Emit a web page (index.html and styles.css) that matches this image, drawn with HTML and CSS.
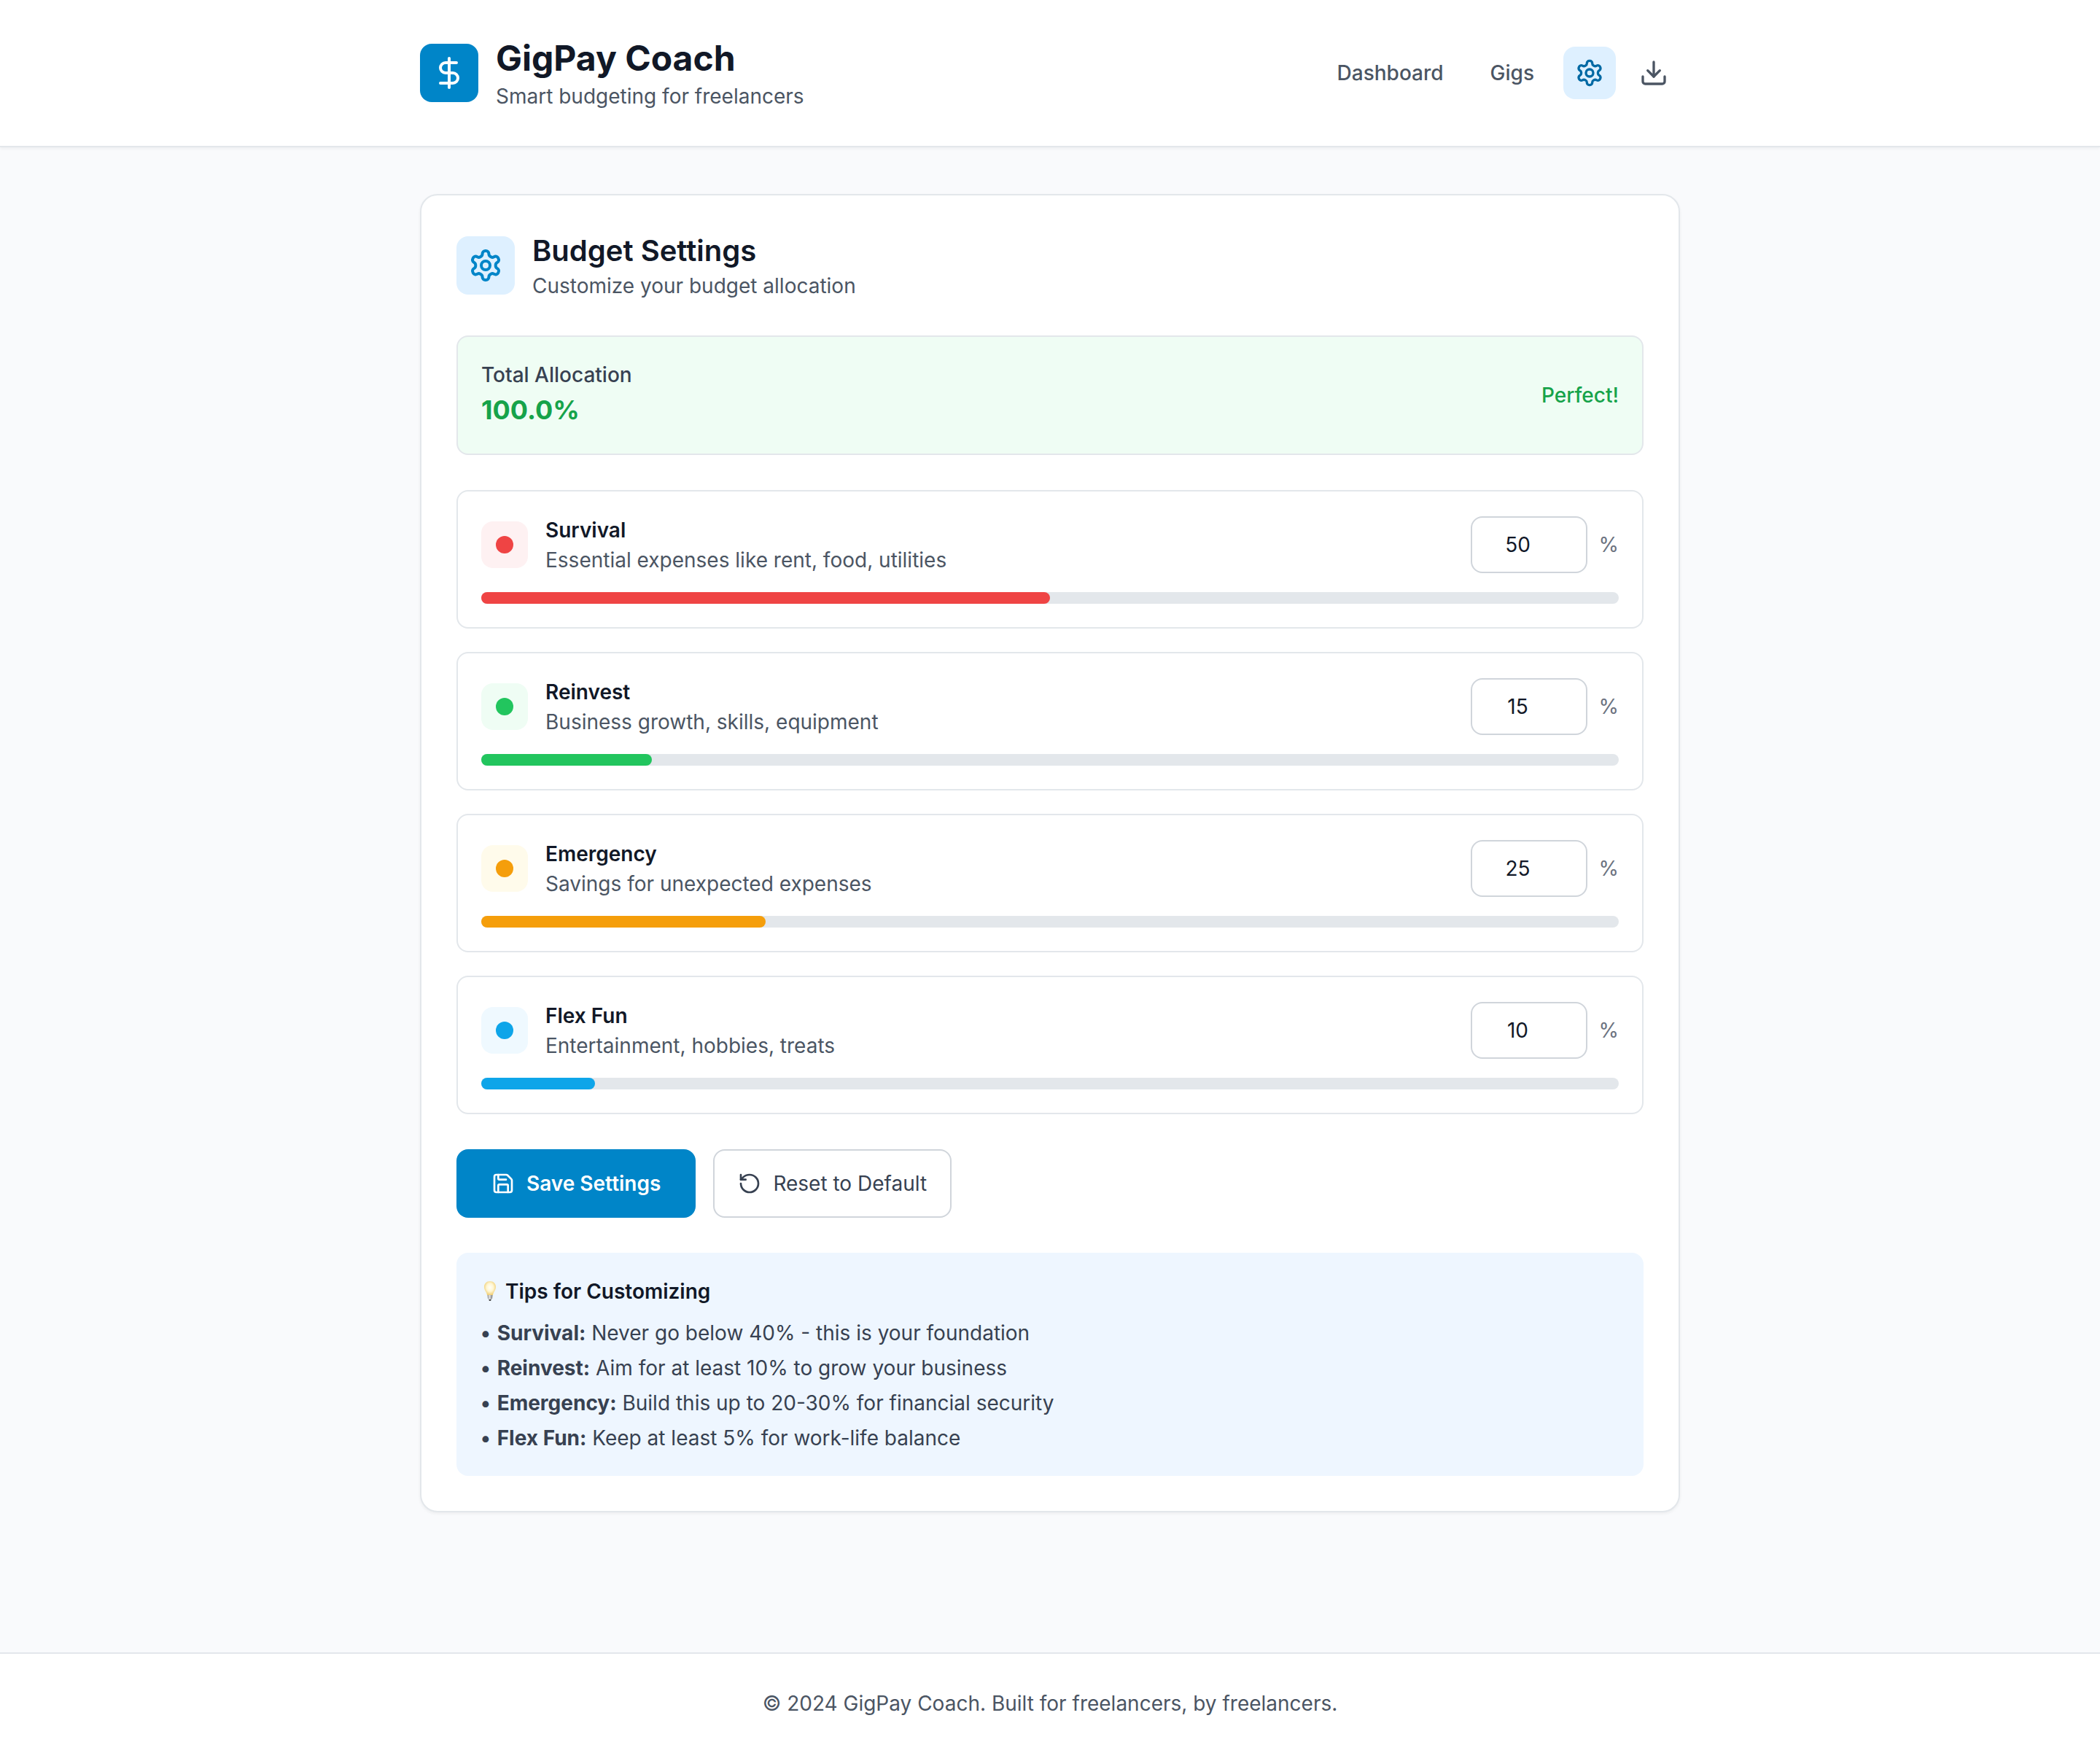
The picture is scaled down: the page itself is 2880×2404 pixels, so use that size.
FILE: index.html
```html
<!DOCTYPE html>
<html lang="en">
<head>
  <meta charset="utf-8">
  <meta name="viewport" content="width=device-width, initial-scale=1">
  <title>GigPay Coach</title>
  <link rel="stylesheet" href="styles.css">
</head>
<body>
  <svg class="sprite" aria-hidden="true">
    <symbol id="icon-settings" viewBox="0 0 24 24">
      <path d="M12.22 2h-.44a2 2 0 0 0-2 2v.18a2 2 0 0 1-1 1.73l-.43.25a2 2 0 0 1-2 0l-.15-.08a2 2 0 0 0-2.73.73l-.22.38a2 2 0 0 0 .73 2.73l.15.1a2 2 0 0 1 1 1.72v.51a2 2 0 0 1-1 1.74l-.15.09a2 2 0 0 0-.73 2.73l.22.38a2 2 0 0 0 2.73.73l.15-.08a2 2 0 0 1 2 0l.43.25a2 2 0 0 1 1 1.73V20a2 2 0 0 0 2 2h.44a2 2 0 0 0 2-2v-.18a2 2 0 0 1 1-1.73l.43-.25a2 2 0 0 1 2 0l.15.08a2 2 0 0 0 2.73-.73l.22-.39a2 2 0 0 0-.73-2.73l-.15-.08a2 2 0 0 1-1-1.74v-.5a2 2 0 0 1 1-1.74l.15-.09a2 2 0 0 0 .73-2.73l-.22-.38a2 2 0 0 0-2.73-.73l-.15.08a2 2 0 0 1-2 0l-.43-.25a2 2 0 0 1-1-1.73V4a2 2 0 0 0-2-2z"/>
      <circle cx="12" cy="12" r="3"/>
    </symbol>
  </svg>

  <header class="site-header">
    <div class="container header-row">
      <div class="brand">
        <div class="tile tile-brand">
          <svg class="icon icon-lg" viewBox="0 0 24 24" aria-hidden="true"><path d="M12 2v20"/><path d="M17 5H9.5a3.5 3.5 0 0 0 0 7h5a3.5 3.5 0 0 1 0 7H6"/></svg>
        </div>
        <div>
          <h1 class="brand-name">GigPay Coach</h1>
          <p class="subtitle">Smart budgeting for freelancers</p>
        </div>
      </div>
      <nav class="nav">
        <button class="nav-button" type="button">Dashboard</button>
        <button class="nav-button" type="button">Gigs</button>
        <button class="nav-icon nav-icon-active" type="button" aria-label="Settings">
          <svg class="icon icon-md" aria-hidden="true"><use href="#icon-settings"/></svg>
        </button>
        <button class="nav-icon" type="button" aria-label="Export">
          <svg class="icon icon-md" viewBox="0 0 24 24" aria-hidden="true"><path d="M21 15v4a2 2 0 0 1-2 2H5a2 2 0 0 1-2-2v-4"/><path d="m7 10 5 5 5-5"/><path d="M12 15V3"/></svg>
        </button>
      </nav>
    </div>
  </header>

  <main class="container main">
    <form class="card">
      <div class="card-header">
        <div class="tile tile-settings">
          <svg class="icon icon-lg" aria-hidden="true"><use href="#icon-settings"/></svg>
        </div>
        <div>
          <h2 class="card-title">Budget Settings</h2>
          <p class="subtitle">Customize your budget allocation</p>
        </div>
      </div>

      <div class="total">
        <div>
          <p class="total-label">Total Allocation</p>
          <p class="total-value">100.0%</p>
        </div>
        <p class="total-status">Perfect!</p>
      </div>

      <div class="categories">
        <section class="category survival">
          <div class="category-row">
            <div class="swatch"><span class="dot"></span></div>
            <div class="category-text">
              <label class="category-name" for="survival">Survival</label>
              <p class="subtitle">Essential expenses like rent, food, utilities</p>
            </div>
            <div class="amount">
              <input class="amount-input" id="survival" type="number" min="0" max="100" value="50">
              <span>%</span>
            </div>
          </div>
          <div class="bar"><div class="bar-fill" style="width: 50%"></div></div>
        </section>

        <section class="category reinvest">
          <div class="category-row">
            <div class="swatch"><span class="dot"></span></div>
            <div class="category-text">
              <label class="category-name" for="reinvest">Reinvest</label>
              <p class="subtitle">Business growth, skills, equipment</p>
            </div>
            <div class="amount">
              <input class="amount-input" id="reinvest" type="number" min="0" max="100" value="15">
              <span>%</span>
            </div>
          </div>
          <div class="bar"><div class="bar-fill" style="width: 15%"></div></div>
        </section>

        <section class="category emergency">
          <div class="category-row">
            <div class="swatch"><span class="dot"></span></div>
            <div class="category-text">
              <label class="category-name" for="emergency">Emergency</label>
              <p class="subtitle">Savings for unexpected expenses</p>
            </div>
            <div class="amount">
              <input class="amount-input" id="emergency" type="number" min="0" max="100" value="25">
              <span>%</span>
            </div>
          </div>
          <div class="bar"><div class="bar-fill" style="width: 25%"></div></div>
        </section>

        <section class="category flex-fun">
          <div class="category-row">
            <div class="swatch"><span class="dot"></span></div>
            <div class="category-text">
              <label class="category-name" for="flex-fun">Flex Fun</label>
              <p class="subtitle">Entertainment, hobbies, treats</p>
            </div>
            <div class="amount">
              <input class="amount-input" id="flex-fun" type="number" min="0" max="100" value="10">
              <span>%</span>
            </div>
          </div>
          <div class="bar"><div class="bar-fill" style="width: 10%"></div></div>
        </section>
      </div>

      <div class="actions">
        <button class="button button-primary" type="submit">
          <svg class="icon icon-sm" viewBox="0 0 24 24" aria-hidden="true"><path d="M15.2 3a2 2 0 0 1 1.4.6l3.8 3.8a2 2 0 0 1 .6 1.4V19a2 2 0 0 1-2 2H5a2 2 0 0 1-2-2V5a2 2 0 0 1 2-2z"/><path d="M17 21v-7a1 1 0 0 0-1-1H8a1 1 0 0 0-1 1v7"/><path d="M7 3v4a1 1 0 0 0 1 1h7"/></svg>
          Save Settings
        </button>
        <button class="button button-secondary" type="reset">
          <svg class="icon icon-sm" viewBox="0 0 24 24" aria-hidden="true"><path d="M3 12a9 9 0 1 0 9-9 9.750 9.750 0 0 0-6.740 2.740L3 8"/><path d="M3 3v5h5"/></svg>
          Reset to Default
        </button>
      </div>

      <section class="tips">
        <h3 class="tips-title">
          <svg class="bulb" viewBox="0 0 28 28" aria-hidden="true">
            <defs>
              <radialGradient id="bulb-glass" cx="50%" cy="45%" r="58%">
                <stop offset="0" stop-color="#fffef8"/>
                <stop offset="0.5" stop-color="#fff6d2"/>
                <stop offset="1" stop-color="#efca6a"/>
              </radialGradient>
              <linearGradient id="bulb-base" x1="0" x2="1">
                <stop offset="0" stop-color="#8b8b8b"/>
                <stop offset="0.4" stop-color="#e2e2e2"/>
                <stop offset="1" stop-color="#777777"/>
              </linearGradient>
            </defs>
            <path fill="url(#bulb-glass)" d="M14 0c-4.800 0-8 3.400-8 8 0 3.200 1.600 5.200 2.700 7.200.8 1.500 1 2.800 1.400 3.800h7.800c.4-1 .6-2.300 1.400-3.800C20.400 13.200 22 11.200 22 8c0-4.600-3.200-8-8-8z"/>
            <path fill="url(#bulb-base)" d="M10.500 19h7l-.4 4.300-1.500 1.700h-3.200l-1.500-1.700z"/>
            <path fill="#4b4b4b" d="M12.200 25h3.600L15 27h-2z"/>
          </svg>
          Tips for Customizing
        </h3>
        <ul class="tips-list">
          <li>• <strong>Survival:</strong> Never go below 40% - this is your foundation</li>
          <li>• <strong>Reinvest:</strong> Aim for at least 10% to grow your business</li>
          <li>• <strong>Emergency:</strong> Build this up to 20-30% for financial security</li>
          <li>• <strong>Flex Fun:</strong> Keep at least 5% for work-life balance</li>
        </ul>
      </section>
    </form>
  </main>

  <footer class="site-footer">
    <p class="container">© 2024 GigPay Coach. Built for freelancers, by freelancers.</p>
  </footer>
</body>
</html>
```
FILE: styles.css
```css
*,
*::before,
*::after {
  box-sizing: border-box;
}

:root {
  --line: #e3e7eb;
  --line-strong: #d0d5db;
  --primary: #0085c8;
  --primary-tint: #def0ff;
}

body,
h1,
h2,
h3,
p,
ul {
  margin: 0;
  padding: 0;
}

body {
  display: flex;
  flex-direction: column;
  min-height: 100vh;
  background: #f9fafc;
  color: #111827;
  font-family: Inter, "Liberation Sans", sans-serif;
  font-size: 28px;
  line-height: 40px;
}

button,
input {
  font: inherit;
}

.container {
  width: 100%;
  max-width: 1792px;
  margin: 0 auto;
  padding: 0 32px;
}

/* Icons */

.sprite {
  position: absolute;
  width: 0;
  height: 0;
}

.icon {
  flex: none;
  fill: none;
  stroke: currentColor;
  stroke-width: 2;
  stroke-linecap: round;
  stroke-linejoin: round;
}

.icon-sm {
  width: 32px;
  height: 32px;
}

.icon-md {
  width: 40px;
  height: 40px;
}

.icon-lg {
  width: 48px;
  height: 48px;
}

.tile {
  display: flex;
  align-items: center;
  justify-content: center;
  width: 80px;
  height: 80px;
  border-radius: 16px;
}

.tile-brand {
  background: var(--primary);
  color: #fff;
}

.tile-settings {
  background: var(--primary-tint);
  color: var(--primary);
}

/* Header */

.site-header {
  padding: 48px 0;
  background: #fff;
  border-bottom: 2px solid var(--line);
  box-shadow: 0 2px 4px rgba(0, 0, 0, 0.05);
}

.header-row,
.brand,
.nav {
  display: flex;
  align-items: center;
}

.header-row {
  justify-content: space-between;
}

.brand {
  gap: 24px;
}

.brand-name {
  font-size: 48px;
  font-weight: 700;
  line-height: 64px;
}

.subtitle {
  color: #4b5563;
}

.nav {
  gap: 16px;
}

.nav-button,
.nav-icon {
  border: 0;
  border-radius: 16px;
  background: none;
  color: #4b5563;
  font-weight: 500;
}

.nav-button {
  padding: 16px 24px;
}

.nav-icon {
  display: flex;
  padding: 16px;
}

.nav-icon-active {
  background: var(--primary-tint);
  color: #0069a4;
}

/* Settings card */

.main {
  padding-top: 64px;
  padding-bottom: 64px;
}

.card {
  display: flex;
  flex-direction: column;
  gap: 48px;
  padding: 48px;
  background: #fff;
  border: 2px solid var(--line);
  border-radius: 24px;
  box-shadow: 0 2px 4px rgba(0, 0, 0, 0.05);
}

.card-header {
  display: flex;
  align-items: center;
  gap: 24px;
}

.card-title {
  font-size: 40px;
  font-weight: 600;
  line-height: 56px;
}

.total {
  display: flex;
  align-items: center;
  justify-content: space-between;
  padding: 32px;
  background: #effdf4;
  border: 2px solid var(--line);
  border-radius: 16px;
}

.total-label {
  color: #374151;
  font-weight: 500;
}

.total-value {
  color: #16a34a;
  font-size: 36px;
  font-weight: 700;
  line-height: 56px;
}

.total-status {
  color: #16a34a;
  font-weight: 500;
}

/* Categories */

.categories {
  display: flex;
  flex-direction: column;
  gap: 32px;
}

.category {
  display: flex;
  flex-direction: column;
  gap: 24px;
  padding: 32px;
  border: 2px solid var(--line);
  border-radius: 16px;
}

.category-row {
  display: flex;
  align-items: center;
  gap: 24px;
}

.swatch {
  display: flex;
  align-items: center;
  justify-content: center;
  width: 64px;
  height: 64px;
  border-radius: 16px;
  background: var(--tint);
}

.dot {
  width: 24px;
  height: 24px;
  border-radius: 50%;
  background: var(--color);
}

.category-text {
  flex: 1;
}

.category-name {
  display: block;
  font-weight: 600;
  line-height: 42px;
}

.amount {
  display: flex;
  align-items: center;
  gap: 16px;
  color: #6b7280;
}

.amount-input {
  width: 160px;
  padding: 16px 54px 16px 24px;
  border: 2px solid var(--line-strong);
  border-radius: 16px;
  background: #fff;
  color: #111827;
  line-height: 42px;
  text-align: center;
  appearance: textfield;
}

.amount-input::-webkit-inner-spin-button {
  display: none;
}

.bar {
  height: 16px;
  border-radius: 8px;
  background: var(--line);
}

.bar-fill {
  height: 100%;
  border-radius: 8px;
  background: var(--color);
}

.survival {
  --color: #ef4444;
  --tint: #fef1f2;
}

.reinvest {
  --color: #22c55e;
  --tint: #effdf4;
}

.emergency {
  --color: #f59e0b;
  --tint: #fffbeb;
}

.flex-fun {
  --color: #0ea5e9;
  --tint: #eff9ff;
}

/* Actions */

.actions {
  display: flex;
  gap: 24px;
}

.button {
  display: flex;
  align-items: center;
  gap: 16px;
  border-radius: 16px;
  line-height: 42px;
}

.button-primary {
  padding: 24px 48px;
  border: 0;
  background: var(--primary);
  color: #fff;
  font-weight: 600;
}

.button-secondary {
  padding: 24px 32px;
  border: 2px solid var(--line-strong);
  background: #fff;
  color: #374151;
  font-weight: 400;
}

/* Tips */

.tips {
  display: flex;
  flex-direction: column;
  gap: 16px;
  padding: 32px;
  border-radius: 16px;
  background: #eef6ff;
}

.tips-title {
  display: flex;
  align-items: center;
  gap: 7px;
  font-size: 28px;
  font-weight: 600;
  line-height: 42px;
}

.bulb {
  width: 28px;
  height: 28px;
}

.tips-list {
  display: flex;
  flex-direction: column;
  gap: 8px;
  color: #374151;
  list-style: none;
}

/* Footer */

.site-footer {
  margin-top: auto;
  padding: 48px 0;
  background: #fff;
  border-top: 2px solid var(--line);
  color: #4b5563;
  text-align: center;
}
```
